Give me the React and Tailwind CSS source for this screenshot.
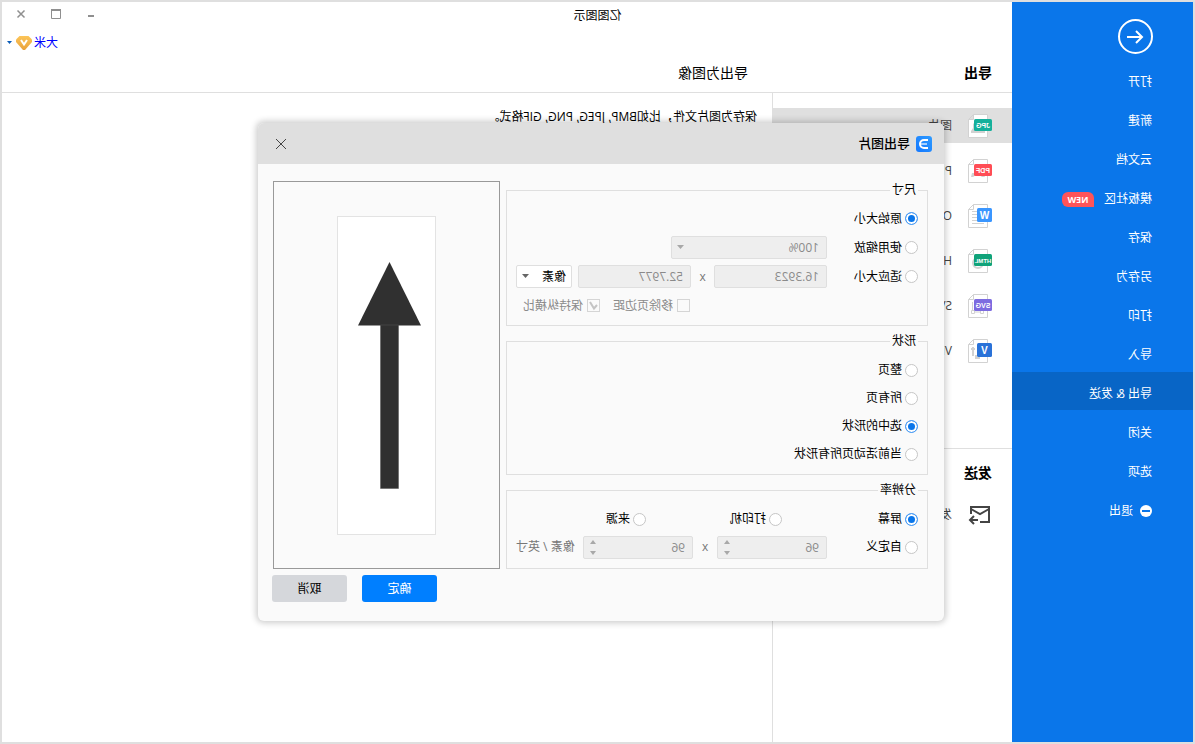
// App.jsx
import React, { useState } from "react";
import { clsx } from "clsx";

const menuItems = [
  { id: "open", label: "打开" },
  { id: "new", label: "新建" },
  { id: "cloud", label: "云文档" },
  { id: "community", label: "模板社区", badge: "NEW" },
  { id: "save", label: "保存" },
  { id: "saveAs", label: "另存为" },
  { id: "print", label: "打印" },
  { id: "import", label: "导入" },
  { id: "export", label: "导出 & 发送" },
  { id: "close", label: "关闭" },
  { id: "options", label: "选项" },
];

const exportTypes = [
  { id: "image", label: "图片", tag: "JPG", fill: "#15b09b", size: 7 },
  { id: "pdf", label: "PDF, PS, EPS", tag: "PDF", fill: "#ff4d55", size: 7 },
  { id: "office", label: "Office", tag: "W", fill: "#3a96ff", size: 10 },
  { id: "html", label: "Html", tag: "HTML", fill: "#10a37a", size: 6 },
  { id: "svg", label: "SVG", tag: "SVG", fill: "#7d6be0", size: 7 },
  { id: "visio", label: "Visio", tag: "V", fill: "#2a72d8", size: 10 },
];

const FileIcon = ({ type }) => {
  const short = type.tag.length === 1;
  return (
    <svg className="w-6 h-6 shrink-0" viewBox="0 0 24 24" aria-hidden="true">
      <path
        d="M4.5 .5H18.5L23.5 5.5V23.5H4.5Z M18.5 .5V5.5H23.5"
        fill="#fff"
        stroke="#d2d2d2"
      />
      {type.id === "image" && (
        <path d="M7 19v-2l4-3 3-4a3 3 0 0 1 5 0v4l2 3v2Z" fill="#d2d2d2" />
      )}
      {type.id === "pdf" && (
        <path d="M7 18h3l4-3 5 3h2l-1-4H9Z" fill="#d2d2d2" />
      )}
      {type.id === "office" && (
        <path
          d="M15 7.5h5M15 10.5h5M15 13.5h5M15 16.5h5M8 19.5h12"
          stroke="#d2d2d2"
        />
      )}
      {type.id === "html" && (
        <circle cx="14" cy="14" r="5" fill="none" stroke="#d2d2d2" strokeWidth="2" />
      )}
      {type.id === "svg" && (
        <path
          d="M8.5 16.5h3v3h-3zM17.5 16.5h3v3h-3zM11.5 18h6M19.5 16V8"
          fill="none"
          stroke="#d2d2d2"
        />
      )}
      {type.id === "visio" && (
        <path
          d="M19 8v9M17 10h4M12 19h4v-3"
          fill="none"
          stroke="#d2d2d2"
          strokeWidth="2"
        />
      )}
      <rect
        x="0"
        y={short ? 4 : 5}
        width={short ? 15 : 18}
        height={short ? 14 : 12}
        rx="1.5"
        fill={type.fill}
      />
      <text
        x={short ? 7.5 : 9}
        y={short ? 14.5 : 13.5}
        fontSize={type.size}
        fontWeight="bold"
        fontFamily="Liberation Sans, sans-serif"
        textAnchor="middle"
        fill="#fff"
      >
        {type.tag}
      </text>
    </svg>
  );
};

const Sidebar = () => {
  return (
    <nav className="w-[181px] shrink-0 bg-[#0a76ea] text-white">
      <div className="h-[58px] pl-10 pt-[17px]">
        <button aria-label="返回" className="block">
          <svg width="35" height="35" viewBox="0 0 35 35" fill="none" stroke="#fff">
            <circle cx="17.5" cy="17.5" r="16.5" strokeWidth="2" />
            <path d="M26 18H11M17 12L11 18L17 24" strokeWidth="2" />
          </svg>
        </button>
      </div>
      <ul className="flex flex-col gap-px">
        {menuItems.map((item) => (
          <li key={item.id}>
            <button
              className={clsx(
                "w-full h-[38px] pl-[41px] pt-[6px] flex items-center gap-[10px]",
                item.id === "export" && "bg-[#0865c6]"
              )}
            >
              {item.label}
              {item.badge && (
                <span className="w-8 h-[15px] rounded-md rounded-bl-none bg-[#ff5459] text-[9px] leading-[15px] font-bold text-center">
                  {item.badge}
                </span>
              )}
            </button>
          </li>
        ))}
        <li>
          <button className="w-full h-[38px] pl-[41px] pt-[6px] flex items-center gap-[7px]">
            <svg width="12" height="12" viewBox="0 0 12 12">
              <circle cx="6" cy="6" r="6" fill="#fff" />
              <path d="M2 6h8" stroke="#0a76ea" strokeWidth="2" />
            </svg>
            退出
          </button>
        </li>
      </ul>
    </nav>
  );
};

const WindowHeader = () => {
  return (
    <header className="border-b border-[#dfdfdf]">
      <div className="h-6 flex items-center justify-end gap-[25px] pr-[14px]">
        <button aria-label="最小化">
          <svg width="10" height="10" viewBox="0 0 10 10">
            <path d="M2 7h6" stroke="#8f8f8f" strokeWidth="2" />
          </svg>
        </button>
        <button aria-label="最大化">
          <svg width="10" height="10" viewBox="0 0 10 10">
            <path d="M.5 1V9.5H9.5V1" fill="none" stroke="#8f8f8f" />
            <path d="M0 1H10" stroke="#8f8f8f" strokeWidth="2" />
          </svg>
        </button>
        <button aria-label="关闭">
          <svg width="10" height="10" viewBox="0 0 10 10">
            <path d="M1.500 1.500l7 7M8.500 1.500l-7 7" stroke="#8f8f8f" strokeWidth="1.500" />
          </svg>
        </button>
      </div>
      <button className="h-8 pt-px ml-auto pr-[5px] flex items-center text-[#0000ff]">
        大米
        <svg className="ml-[2px] mr-1" width="16" height="14" viewBox="0 0 16 14">
          <defs>
            <linearGradient id="vip" x1="0" y1="0" x2="0" y2="1">
              <stop offset="0" stopColor="#fcc558" />
              <stop offset="1" stopColor="#e9a23c" />
            </linearGradient>
          </defs>
          <path d="M3.5 0H12.5L16 3.500V6L9 14H7L0 6V3.500Z" fill="url(#vip)" />
          <path d="M5 4l3 4.500L11 4" fill="none" stroke="#fff" strokeWidth="2" />
        </svg>
        <svg width="5" height="3" viewBox="0 0 5 3">
          <path d="M0 0h5L2.500 3Z" fill="#0a5cb8" />
        </svg>
      </button>
      <div className="h-[34px] pb-1 flex items-center text-sm text-black">
        <h2 className="w-[264px] pl-5 font-bold">导出</h2>
        <h2>导出为图像</h2>
      </div>
    </header>
  );
};

const ExportList = () => {
  return (
    <div className="w-60 shrink-0 pt-[15px] border-r border-[#dfdfdf] text-[#444]">
      <ul className="flex flex-col gap-[10px]">
        {exportTypes.map((type) => (
          <li key={type.id}>
            <button
              className={clsx(
                "w-full h-[35px] pl-5 flex items-center gap-4",
                type.id === "image" && "bg-[#dfdfdf]"
              )}
            >
              <FileIcon type={type} />
              {type.label}
            </button>
          </li>
        ))}
      </ul>
      <div className="mt-20 pt-[10px] border-t border-[#dfdfdf]">
        <h2 className="pl-5 text-sm leading-7 font-bold text-black">发送</h2>
        <button className="w-full h-[35px] mt-[10px] pl-5 flex items-center gap-4">
          <svg width="24" height="24" viewBox="0 0 24 24" fill="none" stroke="#444" strokeWidth="2">
            <path d="M12 19H3V4H21V11" />
            <path d="M3 6l9 5 9-5" />
            <path d="M14 17h8M18 13l4 4-4 4" />
          </svg>
          发送邮件
        </button>
      </div>
    </div>
  );
};

const Radio = ({ label, ...props }) => {
  return (
    <label className="flex items-center gap-[3px]">
      <input
        type="radio"
        className="appearance-none size-[13px] rounded-full border border-[#c6c6c6] bg-white checked:border-[#4c9df5] checked:bg-[#0a76ea] checked:shadow-[inset_0_0_0_2px_#fff]"
        {...props}
      />
      {label}
    </label>
  );
};

const Group = ({ title, className, children }) => {
  return (
    <fieldset className={clsx("border border-[#dfdfdf] px-[9px]", className)}>
      <legend className="px-[2px] leading-[18px]">{title}</legend>
      {children}
    </fieldset>
  );
};

const Caret = ({ className }) => {
  return (
    <svg
      className={clsx("absolute top-[9px] pointer-events-none", className)}
      width="7"
      height="4"
      viewBox="0 0 7 4"
    >
      <path d="M0 0h7L3.500 4Z" fill="currentColor" />
    </svg>
  );
};

const fieldStyle =
  "w-full h-[23px] px-[7px] leading-[21px] rounded-xs border border-[#dfdfdf] bg-[#eeeeee] text-[#8a8a8a] disabled:opacity-100";

const Spinner = ({ label }) => {
  return (
    <div className="relative w-[110px]">
      <input className={fieldStyle} aria-label={label} defaultValue="96" disabled />
      <div className="absolute right-[7px] top-1 flex flex-col gap-[7px] text-[#a8a8a8]">
        <button aria-label="增加" disabled>
          <svg className="block" width="6" height="4" viewBox="0 0 6 4">
            <path d="M0 4h6L3 0Z" fill="currentColor" />
          </svg>
        </button>
        <button aria-label="减少" disabled>
          <svg className="block" width="6" height="4" viewBox="0 0 6 4">
            <path d="M0 0h6L3 4Z" fill="currentColor" />
          </svg>
        </button>
      </div>
    </div>
  );
};

const Check = ({ label, checked }) => {
  return (
    <label className="relative flex items-center gap-1">
      <input
        type="checkbox"
        className="appearance-none size-[13px] border border-[#d5d5d5]"
        defaultChecked={checked}
        disabled
      />
      {checked && (
        <svg className="absolute left-0" width="13" height="13" viewBox="0 0 13 13">
          <path d="M3 6l3 3.500L10 3" fill="none" stroke="#c4c4c4" strokeWidth="2" />
        </svg>
      )}
      {label}
    </label>
  );
};

const SizeGroup = () => {
  const [mode, setMode] = useState("original");

  return (
    <Group title="尺寸" className="py-[5px]">
      <div className="h-[29px] flex items-center">
        <Radio
          name="size"
          label="原始大小"
          checked={mode === "original"}
          onChange={() => setMode("original")}
        />
      </div>
      <div className="h-[29px] flex items-center">
        <div className="w-[91px]">
          <Radio
            name="size"
            label="使用缩放"
            checked={mode === "scale"}
            onChange={() => setMode("scale")}
          />
        </div>
        <div className="relative w-[156px]">
          <select className={clsx(fieldStyle, "appearance-none")} aria-label="缩放" disabled>
            <option>100%</option>
          </select>
          <Caret className="right-[6px] text-[#a8a8a8]" />
        </div>
      </div>
      <div className="h-[29px] flex items-center">
        <div className="w-[91px]">
          <Radio
            name="size"
            label="适应大小"
            checked={mode === "fit"}
            onChange={() => setMode("fit")}
          />
        </div>
        <div className="w-[113px]">
          <input className={fieldStyle} aria-label="宽度" defaultValue="16.3923" disabled />
        </div>
        <span className="w-[23px] text-center text-[#777]">x</span>
        <div className="w-[113px]">
          <input className={fieldStyle} aria-label="高度" defaultValue="52.7977" disabled />
        </div>
        <div className="relative ml-auto w-14">
          <select
            className="appearance-none w-full h-[23px] px-[5px] rounded-xs border border-[#dfdfdf] bg-white"
            aria-label="单位"
          >
            <option>像素</option>
            <option>英寸</option>
          </select>
          <Caret className="right-[6px] text-[#666]" />
        </div>
      </div>
      <div className="h-[29px] pl-[228px] flex items-center gap-[13px] text-[#8a8a8a]">
        <Check label="移除页边距" />
        <Check label="保持纵横比" checked />
      </div>
    </Group>
  );
};

const shapeOptions = ["整页", "所有页", "选中的形状", "当前活动页所有形状"];

const ShapeGroup = () => {
  const [shape, setShape] = useState("选中的形状");

  return (
    <Group title="形状" className="py-[6px]">
      {shapeOptions.map((option) => (
        <div key={option} className="h-7 flex items-center">
          <Radio
            name="shape"
            label={option}
            checked={shape === option}
            onChange={() => setShape(option)}
          />
        </div>
      ))}
    </Group>
  );
};

const ResolutionGroup = () => {
  const [source, setSource] = useState("屏幕");

  const radio = (label) => (
    <Radio
      name="resolution"
      label={label}
      checked={source === label}
      onChange={() => setSource(label)}
    />
  );

  return (
    <Group title="分辨率" className="pt-[6px] pb-[7px]">
      <div className="h-7 flex items-center">
        <div className="w-[136px]">{radio("屏幕")}</div>
        <div className="w-[136px]">{radio("打印机")}</div>
        {radio("来源")}
      </div>
      <div className="h-7 flex items-center">
        <div className="w-[91px]">{radio("自定义")}</div>
        <Spinner label="水平分辨率" />
        <span className="w-6 text-center text-[#777]">x</span>
        <Spinner label="垂直分辨率" />
        <span className="ml-auto whitespace-nowrap text-[#777]">像素 / 英寸</span>
      </div>
    </Group>
  );
};

const ExportDialog = () => {
  return (
    <div
      role="dialog"
      aria-labelledby="export-title"
      className="w-[686px] rounded-md overflow-hidden bg-[#fafafa] text-black shadow-[0_0_6px_2px_rgba(0,0,0,0.2)]"
    >
      <div className="h-[41px] pl-3 pr-[17px] flex items-center gap-[6px] bg-[#dfdfdf]">
        <svg width="16" height="16" viewBox="0 0 16 16">
          <defs>
            <linearGradient id="logo" x1="0" y1="0" x2="1" y2="1">
              <stop offset="0" stopColor="#2f9bff" />
              <stop offset="1" stopColor="#1478ff" />
            </linearGradient>
          </defs>
          <rect width="16" height="16" rx="3" fill="url(#logo)" />
          <path d="M4 4h4a4 4 0 0 1 0 8H4" fill="none" stroke="#fff" strokeWidth="2" />
          <path d="M5 8h6" stroke="#fff" strokeOpacity=".8" strokeWidth="1.500" />
        </svg>
        <h1 id="export-title" className="text-[13px] font-medium">
          导出图片
        </h1>
        <button className="ml-auto" aria-label="关闭对话框">
          <svg width="12" height="12" viewBox="0 0 12 12">
            <path d="M1 1l10 10M11 1L1 11" stroke="#444" />
          </svg>
        </button>
      </div>

      <div className="pt-[17px] pl-4 pr-[15px] flex gap-[6px]">
        <div className="w-[422px] flex flex-col gap-[6px]">
          <SizeGroup />
          <ShapeGroup />
          <ResolutionGroup />
        </div>
        <div className="flex-1 flex items-center justify-center border border-[#999]">
          <svg width="99" height="319" viewBox="0 0 99 319">
            <rect x=".5" y=".5" width="98" height="318" fill="#fff" stroke="#e3e3e3" />
            <path d="M46.500 46L78 109.500H15Z" fill="#303030" />
            <path d="M37.500 109h18V272.500h-18Z" fill="#303030" stroke="#555" strokeWidth=".5" />
          </svg>
        </div>
      </div>

      <div className="pt-[6px] pb-[19px] pr-[14px] flex justify-end gap-[15px]">
        <button className="w-[75px] h-[27px] rounded-[3px] bg-[#007fff] text-white">确定</button>
        <button className="w-[75px] h-[27px] rounded-[3px] bg-[#d5d7db]">取消</button>
      </div>
    </div>
  );
};

const App = () => {
  return (
    <div className="relative min-h-screen flex -scale-x-100 border-2 border-[#dfdfdf] bg-white font-['Open_Sans','Noto_Sans_CJK_SC',sans-serif] text-xs text-black">
      <Sidebar />

      <div className="flex-1 flex flex-col">
        <WindowHeader />
        <main className="flex-1 flex">
          <ExportList />
          <p className="flex-1 pt-[15px] pl-[15px] leading-[18px]">
            保存为图片文件，比如BMP, JPEG, PNG, GIF格式。
          </p>
        </main>
      </div>

      {/* Window title, centred over the sidebar and the content */}
      <div className="absolute inset-x-0 top-0 h-7 flex items-center justify-center pointer-events-none">
        亿图图示
      </div>

      {/* Modal layer */}
      <div className="absolute inset-0 pr-[7px] flex items-center justify-center">
        <ExportDialog />
      </div>
    </div>
  );
};

export default App;
